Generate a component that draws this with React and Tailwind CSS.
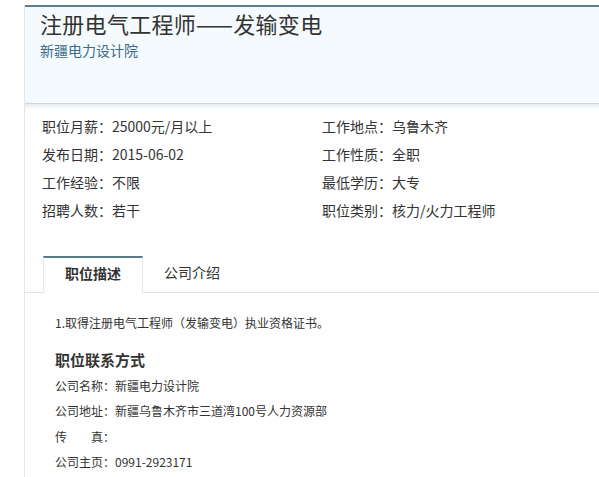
import React from "react";

const info = [
  ["职位月薪：", "25000元/月以上", "工作地点：", "乌鲁木齐"],
  ["发布日期：", "2015-06-02", "工作性质：", "全职"],
  ["工作经验：", "不限", "最低学历：", "大专"],
  ["招聘人数：", "若干", "职位类别：", "核力/火力工程师"],
];

const contacts = [
  ["公司名称：", "新疆电力设计院"],
  ["公司地址：", "新疆乌鲁木齐市三道湾100号人力资源部"],
  ["传\u3000\u3000真：", ""],
  ["公司主页：", "0991-2923171"],
];

export default function App() {
  return (
    <div
      className="w-[599px] h-[477px] overflow-hidden bg-white text-[#333]"
      style={{ fontFamily: '"Noto Sans CJK SC", "Liberation Sans", sans-serif' }}
    >
      <div className="ml-[24px] mt-[5px] border-l border-[#e6e6e6] h-[472px]">
        {/* header */}
        <div className="border-t-2 border-b border-t-[#5b7f97] border-b-[#cfd4d8] bg-[#f4fafd] h-[99px] pl-[15px]">
          <h1 className="text-[22px] leading-[33px] font-normal text-[#333] tracking-[0.3px]">
            注册电气工程师——发输变电
          </h1>
          <div className="mt-[1px] text-[14px] leading-[18px] text-[#3b6a8a]">新疆电力设计院</div>
        </div>
        <div className="h-[6px] bg-gradient-to-b from-[#e9edf0] to-white" />

        {/* info */}
        <div className="grid grid-cols-[280px_1fr] pl-[17px] mt-[2px] text-[14px] leading-[28px]">
          {info.map((r) => (
            <React.Fragment key={r[0]}>
              <div>
                {r[0]}
                {r[1]}
              </div>
              <div>
                {r[2]}
                {r[3]}
              </div>
            </React.Fragment>
          ))}
        </div>

        {/* tabs */}
        <div className="flex mt-[32px] pl-[18px] border-b border-[#dde6ea] h-[37px]">
          <div className="w-[100px] h-[37px] -mb-px bg-white border-t-2 border-x border-t-[#5a7a8a] border-x-[#e3e8eb] flex items-center justify-center pb-[4px] text-[14px] font-bold">
            职位描述
          </div>
          <div className="pl-[21px] flex items-center pb-[4px] text-[14px]">公司介绍</div>
        </div>

        {/* content */}
        <div className="pl-[30px] pt-[21px] text-[12px]">
          <p className="leading-[18px]">1.取得注册电气工程师（发输变电）执业资格证书。</p>
          <h3 className="mt-[18px] text-[15px] font-bold leading-[20px]">职位联系方式</h3>
          <div className="mt-[3px]">
            {contacts.map(([k, v]) => (
              <div key={k} className="leading-[25.3px]">
                {k}
                {v}
              </div>
            ))}
          </div>
        </div>
      </div>
    </div>
  );
}
